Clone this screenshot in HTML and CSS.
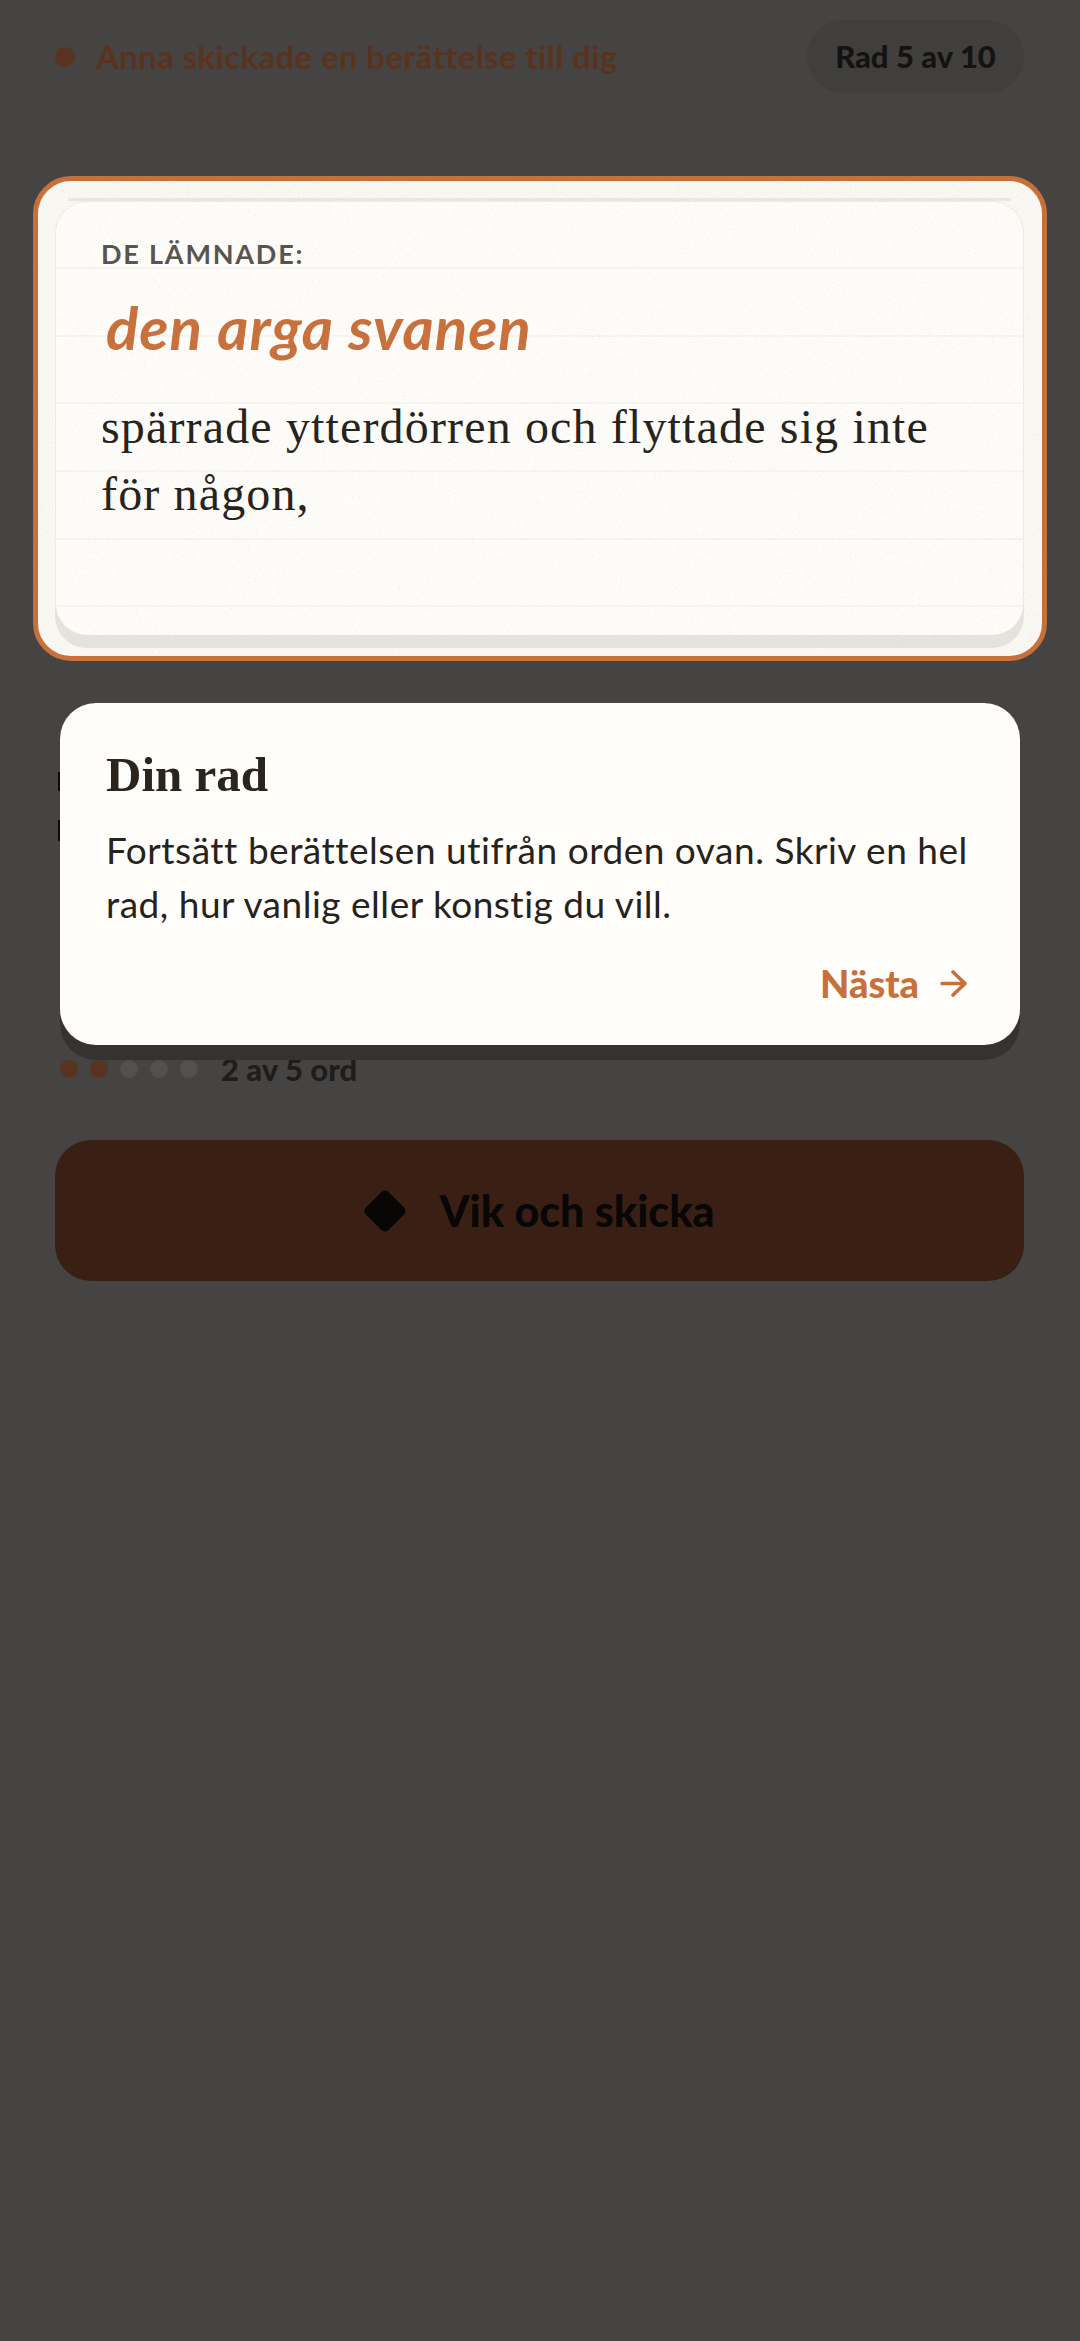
FILE: index.html
```html
<!DOCTYPE html>
<html lang="sv">
<head>
<meta charset="utf-8">
<title>Din rad</title>
<link rel="stylesheet" href="styles.css">
</head>
<body>
<main class="screen">
  <header class="topbar">
    <div class="sender"><span class="sender-dot"></span><span class="sender-text">Anna skickade en berättelse till dig</span></div>
    <div class="pill">Rad 5 av 10</div>
  </header>

  <section class="card">
    <div class="paper">
      <p class="label">DE LÄMNADE:</p>
      <p class="hand">den arga svanen</p>
      <p class="story">spärrade ytterdörren och flyttade sig inte<br>för någon,</p>
    </div>
    <svg class="grain" aria-hidden="true">
      <filter id="grain-filter"><feTurbulence type="fractalNoise" baseFrequency="0.7" numOctaves="3" seed="4"/><feColorMatrix values="0 0 0 0 0.55  0 0 0 0 0.53  0 0 0 0 0.48  0 0 0 4 -2.4"/></filter>
      <rect width="100%" height="100%" filter="url(#grain-filter)"/>
    </svg>
  </section>

  <div class="compose"><span class="mark"></span><span class="mark mark-tall"></span></div>

  <div class="progress">
    <div class="dots"><span class="dot on"></span><span class="dot on"></span><span class="dot"></span><span class="dot"></span><span class="dot"></span></div>
    <span class="count">2 av 5 ord</span>
  </div>

  <button class="send"><span class="diamond"></span><span>Vik och skicka</span></button>

  <aside class="tip">
    <h2 class="tip-title">Din rad</h2>
    <p class="tip-body">Fortsätt berättelsen utifrån orden ovan. Skriv en hel<br>rad, hur vanlig eller konstig du vill.</p>
    <div class="tip-actions">
      <span class="next">Nästa</span>
      <svg class="arrow" viewBox="0 0 27 27" aria-hidden="true"><path d="M2 13.5H25M13 2L25 13.5L13 25"/></svg>
    </div>
  </aside>
</main>
</body>
</html>
```
FILE: styles.css
```css
* { box-sizing: border-box; }
html, body { margin: 0; padding: 0; }
body { background: #454442; font-family: "Lato", "Noto Sans", sans-serif; }
p, h2 { margin: 0; }

.screen { position: relative; width: 1080px; height: 2341px; padding: 20px 56px 0 55px; background: #454442; overflow: hidden; }

.topbar { display: flex; align-items: center; justify-content: space-between; height: 73px; }
.sender { display: flex; align-items: center; gap: 21px; }
.sender-dot { width: 20px; height: 20px; border-radius: 50%; background: #5a3220; }
.sender-text { margin-top: -2px; font-size: 33px; font-weight: 700; color: #5a3220; letter-spacing: 0.35px; }
.pill { width: 217px; height: 73px; padding-bottom: 1px; display: flex; align-items: center; justify-content: center; border-radius: 37px; background: #403f3d; font-size: 31px; font-weight: 900; color: #141311; }

.card { position: relative; width: 1014px; height: 485px; margin: 83px 0 0 -22px; padding: 20px 18px 0 17px; border: 5px solid #c8703c; border-radius: 38px; background: #f9f7f2; overflow: hidden; }
.paper { position: relative; height: 434px; padding: 37px 0 0 45px; border: 1px solid #ecebe5; border-bottom: 0; border-radius: 32px; box-shadow: 0 13px 0 #e6e3de; background-color: #fdfcf8; background-image: repeating-linear-gradient(to bottom, transparent 0, transparent 65px, #f6f4ef 65px, #f6f4ef 67px, transparent 67px, transparent 67.7px); }
.paper::before { content: ""; position: absolute; top: -4px; left: 12px; right: 12px; height: 3px; background: #e9e7e2; }
.grain { position: absolute; inset: 0; width: 100%; height: 100%; pointer-events: none; opacity: 0.2; }

.label { font-size: 27px; line-height: 30px; font-weight: 700; letter-spacing: 1.8px; color: #57544e; }
.hand { margin: 22px 0 0 5px; font-style: italic; font-weight: 700; font-size: 60px; line-height: 72px; letter-spacing: 1px; color: #c8703c; }
.story { margin-top: 30px; font-family: "Liberation Serif", serif; font-size: 48px; line-height: 67px; letter-spacing: 1.15px; color: #25211b; }

.compose { display: flex; flex-direction: column; gap: 29px; height: 69px; margin: 111px 0 0 3px; }
.mark { width: 2px; height: 19px; background: #0d0c0b; }
.mark-tall { height: 21px; }

.progress { display: flex; align-items: center; gap: 23px; height: 24px; margin: 216px 0 0 5px; }
.dots { display: flex; gap: 12px; }
.dot { width: 18px; height: 18px; border-radius: 50%; background: #525150; }
.dot.on { background: #5a3220; }
.count { font-size: 31px; font-weight: 900; line-height: 24px; color: #1e1d1b; }

.send { display: flex; align-items: center; justify-content: center; gap: 38px; width: 969px; height: 141px; margin-top: 59px; padding: 0 0 0 5px; border: 0; border-radius: 36px; background: #3a2014; font-family: inherit; font-size: 43px; font-weight: 900; color: #090706; }
.diamond { width: 32px; height: 32px; border-radius: 5px; background: #080605; transform: rotate(45deg); }

.tip { position: absolute; top: 703px; left: 60px; width: 960px; height: 342px; padding: 44px 47px 0 46px; border-radius: 36px; background: #fffefa; box-shadow: 0 15px 0 #343331; }
.tip-title { font-family: "Liberation Serif", serif; font-size: 49px; line-height: 56px; font-weight: 700; color: #2a241c; }
.tip-body { margin-top: 20px; font-size: 37px; line-height: 54px; letter-spacing: 0.52px; color: #26221c; }
.tip-actions { display: flex; align-items: center; justify-content: flex-end; gap: 21px; margin: 32px 6px 0 0; }
.next { font-size: 38px; line-height: 40px; font-weight: 900; color: #c8703c; }
.arrow { width: 27px; height: 27px; fill: none; stroke: #c8703c; stroke-width: 3.6; stroke-linecap: round; stroke-linejoin: round; }
```
